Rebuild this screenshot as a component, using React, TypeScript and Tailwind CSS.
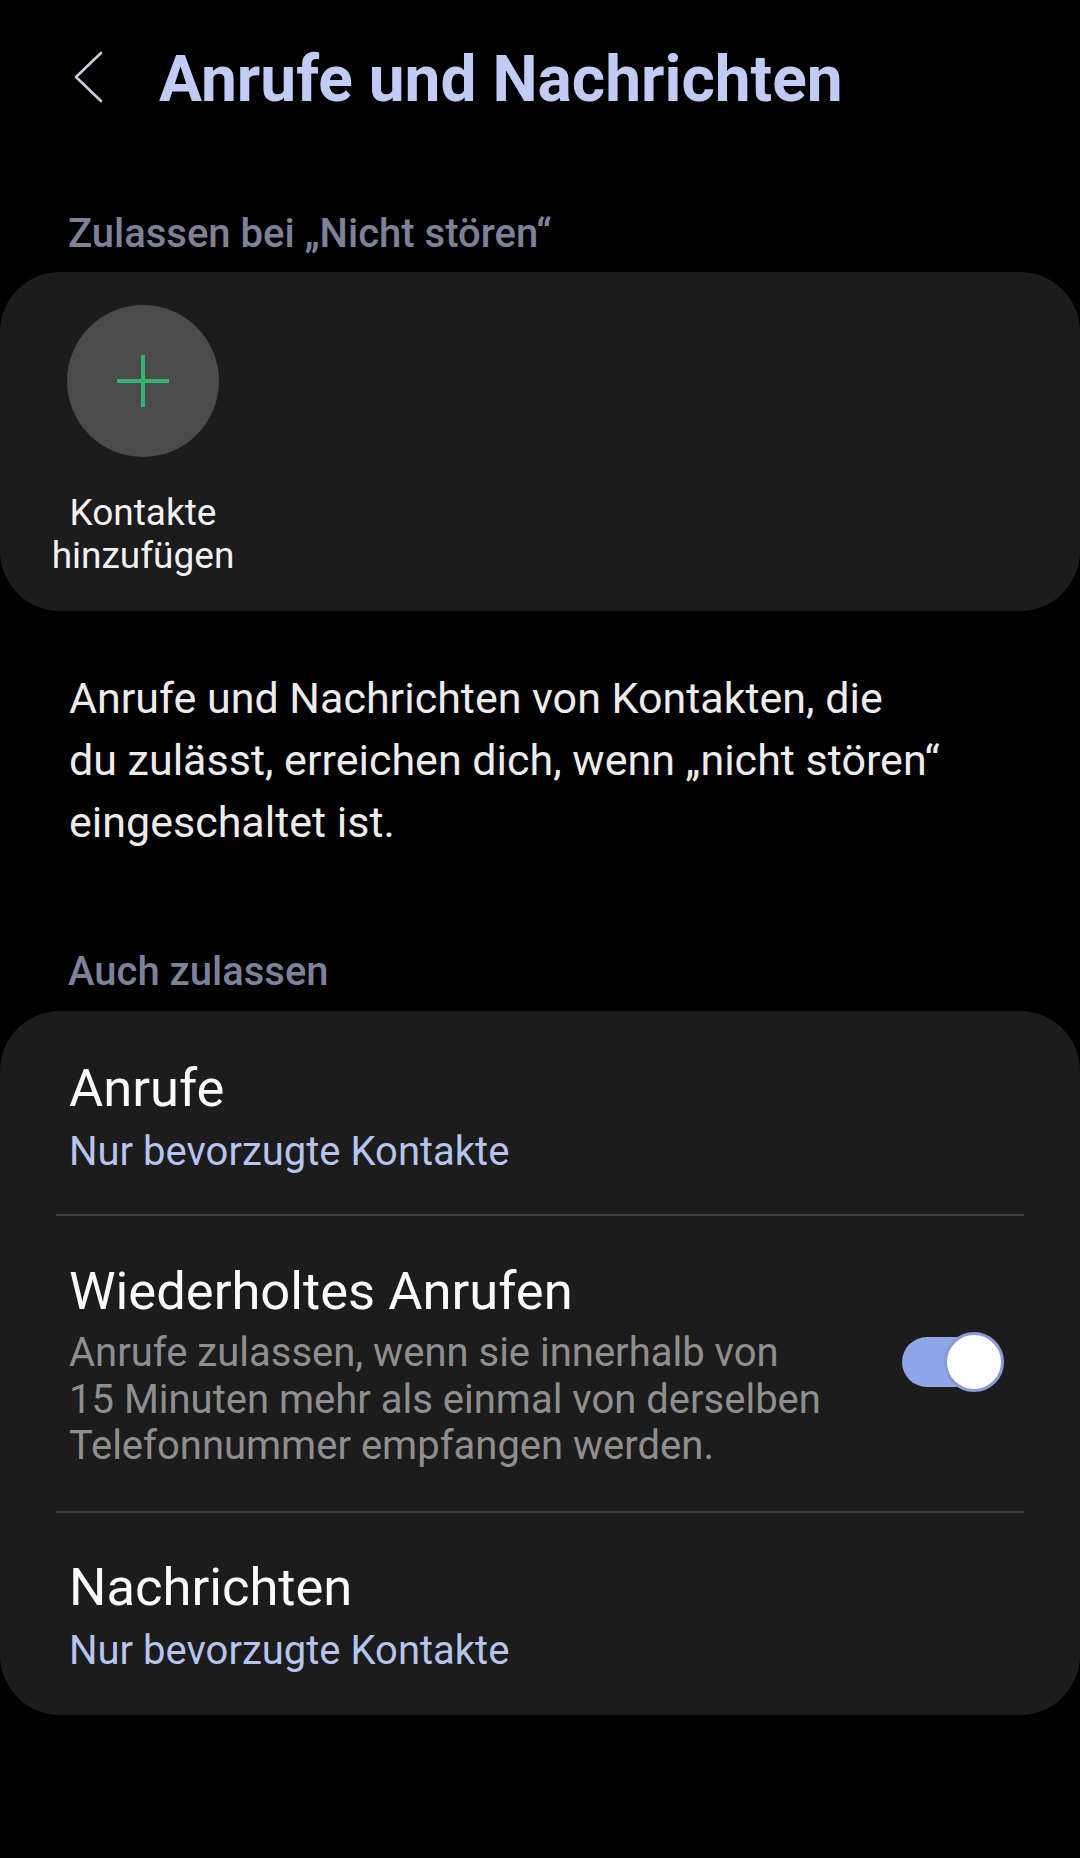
export default function App() {
	return (
		<div className="min-h-[1858px] w-[1080px] bg-black font-['Roboto',sans-serif] antialiased">
			{/* header */}
			<div className="flex items-start pt-[44px] pl-[73px]">
				<svg
					width="30"
					height="54"
					viewBox="0 0 30 54"
					className="mt-[7px] shrink-0"
					fill="none"
					stroke="#c9cde0"
					strokeWidth="2.6"
					strokeLinecap="round"
					strokeLinejoin="round"
				>
					<path d="M28 2 L3 26 L28 50" />
				</svg>
				<h1 className="ml-[56px] text-[64px] leading-[72px] font-bold text-[#c1ccf5] whitespace-nowrap">
					Anrufe und Nachrichten
				</h1>
			</div>

			{/* Zulassen */}
			<div className="mt-[98px] pl-[68px] text-[40px] leading-[40px] font-medium text-[#7d8299]">
				Zulassen bei „Nicht stören“
			</div>

			<div className="mt-[18px] rounded-[60px] bg-[#1c1c1c] pt-[33px] pb-[34px]">
				<div className="ml-[43px] flex w-[200px] flex-col items-center">
					<div className="flex h-[152px] w-[152px] items-center justify-center rounded-full bg-[#4b4b4b]">
						<svg width="52" height="52" viewBox="0 0 52 52" fill="none" stroke="#33b571" strokeWidth="4">
							<path d="M26 0 V52 M0 26 H52" />
						</svg>
					</div>
					<div className="mt-[34px] text-center text-[37px] leading-[43px] text-[#f2f2f2] whitespace-nowrap">
						Kontakte
						<br />
						hinzufügen
					</div>
				</div>
			</div>

			<p className="mt-[56px] pl-[69px] text-[43px] leading-[62px] text-[#ececec] whitespace-nowrap">
				Anrufe und Nachrichten von Kontakten, die
				<br />
				du zulässt, erreichen dich, wenn „nicht stören“
				<br />
				eingeschaltet ist.
			</p>

			{/* Auch zulassen */}
			<div className="mt-[99px] pl-[68px] text-[40px] leading-[40px] font-medium text-[#7d8299]">
				Auch zulassen
			</div>

			<div className="mt-[19px] rounded-[60px] bg-[#1c1c1c] pt-[49px] pb-[43px]">
				<div className="pl-[69px]">
					<div className="text-[52.5px] leading-[56px] text-[#fafafa]">Anrufe</div>
					<div className="mt-[14px] text-[40px] leading-[43px] text-[#b7c4ee]">
						Nur bevorzugte Kontakte
					</div>
				</div>

				<div className="mx-[56px] mt-[41px] h-[2px] bg-[#3e3e3e]" />

				<div className="flex items-center pt-[47px] pb-[41px] pl-[69px] pr-[76px]">
					<div className="flex-1">
						<div className="text-[52.5px] leading-[56px] text-[#fafafa]">
							Wiederholtes Anrufen
						</div>
						<div className="mt-[11px] text-[40px] leading-[46.5px] text-[#8f8f8f] whitespace-nowrap">
							Anrufe zulassen, wenn sie innerhalb von
							<br />
							15 Minuten mehr als einmal von derselben
							<br />
							Telefonnummer empfangen werden.
						</div>
					</div>
					<div className="relative mb-[8px] h-[62px] w-[102px] shrink-0">
						<div className="absolute left-0 top-[6px] h-[50px] w-[96px] rounded-full bg-[#8fa6e8]" />
						<div className="absolute right-0 top-[1px] h-[60px] w-[60px] rounded-full border-[3px] border-[#8a9ad6] bg-white" />
					</div>
				</div>

				<div className="mx-[56px] h-[2px] bg-[#3e3e3e]" />

				<div className="pt-[46px] pl-[69px]">
					<div className="text-[52.5px] leading-[56px] text-[#fafafa]">Nachrichten</div>
					<div className="mt-[14px] text-[40px] leading-[43px] text-[#b7c4ee]">
						Nur bevorzugte Kontakte
					</div>
				</div>
			</div>
		</div>
	);
}
